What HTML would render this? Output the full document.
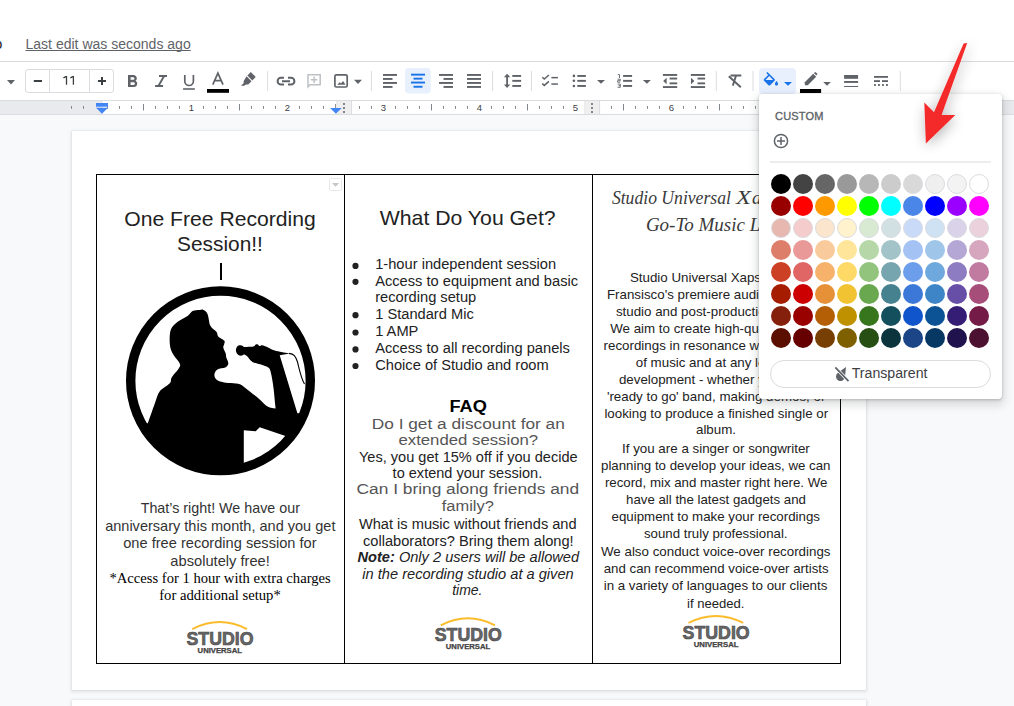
<!DOCTYPE html>
<html><head><meta charset="utf-8">
<style>
html,body{margin:0;padding:0}
body{width:1014px;height:706px;overflow:hidden;position:relative;background:#f8f9fa;font-family:"Liberation Sans",sans-serif}
.abs{position:absolute}
#hdr{left:0;top:0;width:1014px;height:61px;background:#fff}
#sep{left:0;top:61px;width:1014px;height:1px;background:#dadce0}
#tb{left:0;top:62px;width:1014px;height:38px;background:#fff}
#ruler{left:0;top:100px;width:1014px;height:15px;background:#e8eaed;border-top:1px solid #dadce0;border-bottom:1px solid #dadce0;box-sizing:border-box}
#rwhite{left:103px;top:101px;width:740px;height:13px;background:#fff}
.page{background:#fff;box-shadow:0 0 1px 0 rgba(60,64,67,.15),0 1px 3px 1px rgba(60,64,67,.12)}
svg{position:absolute;left:0;top:0;overflow:visible}
#pop{left:759px;top:94px;width:243px;height:305px;background:#fff;border-radius:4px;box-shadow:0 4px 8px 3px rgba(60,64,67,.15),0 1px 3px rgba(60,64,67,.3)}
.sw{position:absolute;width:20px;height:20px;border-radius:50%;box-sizing:border-box}
.lt{border:1px solid rgba(0,0,0,.1)}
</style></head><body>
<div id="hdr" class="abs"></div>
<div id="sep" class="abs"></div>
<div id="tb" class="abs"></div>
<div id="ruler" class="abs"></div>
<div id="rwhite" class="abs"></div>
<div class="abs page" style="left:72px;top:131px;width:794px;height:559px"></div>
<div class="abs page" style="left:72px;top:700px;width:794px;height:100px"></div>

<!-- table -->
<div class="abs" style="left:96px;top:174px;width:745px;height:490px;box-sizing:border-box;border:1px solid #000"></div>
<div class="abs" style="left:344px;top:174px;width:1px;height:490px;background:#000"></div>
<div class="abs" style="left:592px;top:174px;width:1px;height:490px;background:#000"></div>

<!-- document text -->
<svg width="1014" height="706" viewBox="0 0 1014 706" style="font-family:'Liberation Sans',sans-serif">
<g fill="#000">
 <text x="220" y="226" font-size="21" text-anchor="middle" textLength="191.5" lengthAdjust="spacingAndGlyphs" fill="#222">One Free Recording</text>
 <text x="220" y="250.5" font-size="21" text-anchor="middle" textLength="85.8" lengthAdjust="spacingAndGlyphs" fill="#222">Session!!</text>
</g>
<rect x="220" y="263" width="2" height="17" fill="#000"/>
<g fill="#333" font-size="14.4" text-anchor="middle">
 <text x="220.3" y="513" textLength="159.3" lengthAdjust="spacingAndGlyphs">That’s right! We have our</text>
 <text x="220.3" y="531" textLength="230.3" lengthAdjust="spacingAndGlyphs">anniversary this month, and you get</text>
 <text x="219.9" y="548" textLength="193.4" lengthAdjust="spacingAndGlyphs">one free recording session for</text>
 <text x="220.1" y="566" textLength="99.5" lengthAdjust="spacingAndGlyphs">absolutely free!</text>
</g>
<g fill="#000" font-size="14.67" text-anchor="middle" style="font-family:'Liberation Serif',serif">
 <text x="220.1" y="582.8" textLength="221.3" lengthAdjust="spacingAndGlyphs">*Access for 1 hour with extra charges</text>
 <text x="220" y="599.5" textLength="121.6" lengthAdjust="spacingAndGlyphs">for additional setup*</text>
</g>

<!-- col 2 -->
<text x="467.7" y="225.4" font-size="21" text-anchor="middle" textLength="175.9" lengthAdjust="spacingAndGlyphs" fill="#222">What Do You Get?</text>
<g fill="#222" font-size="14.67">
 <circle cx="355.5" cy="265.9" r="3.1"/>
 <circle cx="355.5" cy="281.8" r="3.1"/>
 <circle cx="355.5" cy="315.2" r="3.1"/>
 <circle cx="355.5" cy="332.5" r="3.1"/>
 <circle cx="355.5" cy="349.4" r="3.1"/>
 <circle cx="355.5" cy="366" r="3.1"/>
 <text x="375.2" y="269.4">1-hour independent session</text>
 <text x="375.2" y="285.7">Access to equipment and basic</text>
 <text x="375.2" y="302">recording setup</text>
 <text x="375.2" y="318.9">1 Standard Mic</text>
 <text x="375.2" y="336.2">1 AMP</text>
 <text x="375.2" y="353.1">Access to all recording panels</text>
 <text x="375.2" y="369.7">Choice of Studio and room</text>
</g>
<text x="468.1" y="411.6" font-size="16" font-weight="bold" text-anchor="middle" textLength="37.4" lengthAdjust="spacingAndGlyphs" fill="#000">FAQ</text>
<g fill="#555" font-size="14.67" text-anchor="middle">
 <text x="468.3" y="429.3" textLength="193.1" lengthAdjust="spacingAndGlyphs">Do I get a discount for an</text>
 <text x="468.3" y="444.7" textLength="139.7" lengthAdjust="spacingAndGlyphs">extended session?</text>
 <text x="467.8" y="494.4" textLength="222.5" lengthAdjust="spacingAndGlyphs">Can I bring along friends and</text>
 <text x="467.8" y="511.4" textLength="52.1" lengthAdjust="spacingAndGlyphs">family?</text>
</g>
<g fill="#222" font-size="14.67" text-anchor="middle">
 <text x="468.3" y="461.7" textLength="218.7" lengthAdjust="spacingAndGlyphs">Yes, you get 15% off if you decide</text>
 <text x="467.4" y="478.3" textLength="149.6" lengthAdjust="spacingAndGlyphs">to extend your session.</text>
 <text x="467.8" y="528.9" textLength="217.7" lengthAdjust="spacingAndGlyphs">What is music without friends and</text>
 <text x="468.3" y="545.5" textLength="210.7" lengthAdjust="spacingAndGlyphs">collaborators? Bring them along!</text>
 <text x="468.3" y="562.1" textLength="221.5" lengthAdjust="spacingAndGlyphs" font-style="italic"><tspan font-weight="bold">Note:</tspan> Only 2 users will be allowed</text>
 <text x="468" y="578.6" textLength="211.4" lengthAdjust="spacingAndGlyphs" font-style="italic">in the recording studio at a given</text>
 <text x="467.3" y="594.7" textLength="30.3" lengthAdjust="spacingAndGlyphs" font-style="italic">time.</text>
</g>

<!-- col 3 -->
<g fill="#3a3a3a" font-size="19" font-style="italic" style="font-family:'Liberation Serif',serif">
 <text x="611.9" y="203.8" textLength="119" lengthAdjust="spacingAndGlyphs">Studio Universal</text>
 <text x="736" y="203.8" textLength="15" lengthAdjust="spacingAndGlyphs">X</text>
 <text x="752" y="203.8">aps: San</text>
 <text x="645.9" y="231.4">Go-To Music Lab</text>
</g>
<g fill="#222" font-size="13.33">
 <text x="629.9" y="281.9">Studio Universal Xaps is San</text>
 <text x="606.9" y="299">Fransisco's premiere audio recording</text>
 <text x="615.9" y="316.1">studio and post-production facility.</text>
 <text x="610.2" y="333.4">We aim to create high-quality</text>
 <text x="603.6" y="350">recordings in resonance with all genres</text>
 <text x="635.8" y="367.1">of music and at any level of</text>
 <text x="618.9" y="384.4">development - whether you're a</text>
 <text x="606.9" y="401">'ready to go' band, making demos, or</text>
 <text x="604.4" y="417.6">looking to produce a finished single or</text>
</g>
<g fill="#222" font-size="13.33" text-anchor="middle">
 <text x="716" y="434.2">album.</text>
 <text x="715.9" y="452.7" textLength="187.8" lengthAdjust="spacingAndGlyphs">If you are a singer or songwriter</text>
 <text x="715.75" y="469.9" textLength="229.5" lengthAdjust="spacingAndGlyphs">planning to develop your ideas, we can</text>
 <text x="716.15" y="487" textLength="222.5" lengthAdjust="spacingAndGlyphs">record, mix and master right here. We</text>
 <text x="715.95" y="504" textLength="179.9" lengthAdjust="spacingAndGlyphs">have all the latest gadgets and</text>
 <text x="715.75" y="521" textLength="208.5" lengthAdjust="spacingAndGlyphs">equipment to make your recordings</text>
 <text x="715.75" y="538" textLength="143.5" lengthAdjust="spacingAndGlyphs">sound truly professional.</text>
 <text x="715.75" y="556" textLength="229.5" lengthAdjust="spacingAndGlyphs">We also conduct voice-over recordings</text>
 <text x="716.15" y="573" textLength="224.9" lengthAdjust="spacingAndGlyphs">and can recommend voice-over artists</text>
 <text x="715.55" y="590" textLength="223.7" lengthAdjust="spacingAndGlyphs">in a variety of languages to our clients</text>
 <text x="715.75" y="607.7" textLength="57.5" lengthAdjust="spacingAndGlyphs">if needed.</text>
</g>
</svg>

<!-- header + toolbar -->
<svg width="1014" height="706" viewBox="0 0 1014 706" style="font-family:'Liberation Sans',sans-serif">
 <text x="-5.5" y="48.8" font-size="14" fill="#202124">o</text>
 <text x="25.5" y="48.8" font-size="14" fill="#5f6368" textLength="165.2" lengthAdjust="spacingAndGlyphs">Last edit was seconds ago</text>
 <rect x="25.5" y="50" width="165.2" height="1" fill="#5f6368"/>
 <g fill="#5f6368" stroke="none">
  <!-- font dropdown arrow -->
  <path d="M7 80h8l-4 4.5z"/>
 </g>
 <!-- font size box -->
 <rect x="25.5" y="69.5" width="88" height="23" rx="2.5" fill="#fff" stroke="#dadce0"/>
 <path d="M49.5 70v22M89.5 70v22" stroke="#dadce0"/>
 <rect x="33.8" y="80" width="8.2" height="2" fill="#3c4043"/>
 <path d="M66.5 76.1v8.7M63.4 77.9l3.1-1.6M73.4 76.1v8.7M70.3 77.9l3.1-1.6" stroke="#3c4043" stroke-width="1.3" fill="none"/>
 <path d="M98 81h8M102 77v8" stroke="#3c4043" stroke-width="2"/>
 <g fill="#5f6368">
  <!-- bold -->
  <path transform="translate(121.98 71.56) scale(0.86)" d="M15.6 10.79c.97-.67 1.65-1.77 1.65-2.79 0-2.26-1.75-4-4-4H7v14h7.04c2.09 0 3.71-1.7 3.71-3.79 0-1.52-.86-2.82-2.15-3.42zM10 6.5h3c.83 0 1.5.67 1.5 1.5s-.67 1.5-1.5 1.5h-3v-3zm3.5 9H10v-3h3.5c.83 0 1.5.67 1.5 1.5s-.67 1.5-1.5 1.5z"/>
 </g>
 <g stroke="#5f6368" fill="none">
  <!-- italic -->
  <path d="M159 76h8M155.1 86h8M164 76.2L158.4 86" stroke-width="1.9"/>
  <!-- underline -->
  <path d="M184.8 75v6.2a4.3 4.3 0 0 0 8.6 0V75" stroke-width="1.7"/>
  <path d="M183.1 89h11.7" stroke-width="1.6"/>
  <!-- A -->
  <path d="M212.8 84.7L217.9 73.2L223 84.7M214.6 80.6h6.6" stroke-width="1.7"/>
 </g>
 <rect x="207" y="89" width="22" height="3.8" fill="#000"/>
 <!-- highlighter -->
 <g fill="#5f6368">
  <path d="M250.8 72.1l4.9 4.9-3.4 3.4-4.9-4.9z"/>
  <path d="M246.6 76.3l4.9 4.9-3.2 3.2h-2.4l-1.6 1.4h-3.3l2.7-2.7v-2.1z"/>
 </g>
 <path d="M267.6 71v20M371.4 71v20M492.6 71v20M531.5 71v20M716.3 71v20M753 71v20M900.3 71v20" stroke="#dadce0" stroke-width="1"/>
 <!-- link -->
 <g fill="none" stroke="#5f6368" stroke-width="2">
  <path d="M284 77.8h-3a3.4 3.4 0 0 0 0 6.8h3M288 77.8h3a3.4 3.4 0 0 1 0 6.8h-3M282 81.2h8"/>
 </g>
 <!-- comment (disabled) -->
 <g fill="none" stroke="#bdc1c6" stroke-width="1.5">
  <path d="M308 74.7h12.2v10h-10.2l-2 2.2z"/>
  <path d="M314.1 76.5v6.4M310.9 79.7h6.4"/>
 </g>
 <!-- image -->
 <rect x="334.9" y="74.8" width="12.3" height="12.2" rx="1.5" fill="none" stroke="#5f6368" stroke-width="1.7"/>
 <path d="M337.2 84.7l2.4-2.4 1.3 1.3 2.2-2.7 2.4 3.8z" fill="#5f6368"/>
 <path d="M354 79.8h8l-4 4.2zM597 80h8l-4 3.8zM642.9 80h8l-4 3.8z" fill="#5f6368"/>
 <!-- align left -->
 <g fill="#5f6368">
  <rect x="383" y="74" width="14" height="1.9"/><rect x="383" y="78" width="9.5" height="1.9"/><rect x="383" y="82" width="14" height="1.9"/><rect x="383" y="86" width="9.5" height="1.9"/>
 </g>
 <!-- align center active -->
 <rect x="405" y="68" width="25.8" height="25.5" rx="4" fill="#e8f0fe"/>
 <g fill="#1a73e8">
  <rect x="411" y="73.7" width="14" height="1.9"/><rect x="413.5" y="77.7" width="9" height="1.9"/><rect x="411" y="81.6" width="14" height="1.9"/><rect x="413.5" y="85.8" width="9" height="1.9"/>
 </g>
 <!-- align right -->
 <g fill="#5f6368">
  <rect x="439" y="74" width="14" height="1.9"/><rect x="443.5" y="78" width="9.5" height="1.9"/><rect x="439" y="82" width="14" height="1.9"/><rect x="443.5" y="86" width="9.5" height="1.9"/>
 </g>
 <!-- justify -->
 <g fill="#5f6368">
  <rect x="467" y="74" width="14" height="1.9"/><rect x="467" y="78" width="14" height="1.9"/><rect x="467" y="82" width="14" height="1.9"/><rect x="467" y="86" width="14" height="1.9"/>
 </g>
 <!-- line spacing -->
 <g fill="#5f6368">
  <path d="M507.1 73.7l3.2 3.6h-2.3v7.2h2.3l-3.2 3.5-3.2-3.5h2.3v-7.2h-2.3z"/>
  <rect x="512.3" y="75" width="8.8" height="1.9"/><rect x="512.3" y="79.9" width="8.8" height="1.9"/><rect x="512.3" y="85" width="8.8" height="1.9"/>
 </g>
 <!-- checklist -->
 <g fill="none" stroke="#5f6368" stroke-width="1.5">
  <path d="M542.3 77.2l2 1.8 4.6-4M542.3 83.6l2 1.8 4.6-4"/>
 </g>
 <g fill="#5f6368">
  <rect x="551.4" y="76.9" width="6.5" height="1.5"/><rect x="551.4" y="83.3" width="6.5" height="1.5"/>
 </g>
 <!-- bullet list -->
 <g fill="#5f6368">
  <circle cx="573.9" cy="75.9" r="1.3"/><circle cx="573.9" cy="80.8" r="1.3"/><circle cx="573.9" cy="86" r="1.3"/>
  <rect x="577.3" y="75" width="8.6" height="1.9"/><rect x="577.3" y="79.9" width="8.6" height="1.9"/><rect x="577.3" y="85" width="8.6" height="1.9"/>
 </g>
 <!-- numbered list -->
 <g fill="#5f6368">
  <path d="M617.8 74.6h1.7v3.4M617.6 79.2h2.7v1.5h-2.7v1.5h2.7M617.6 84.1h2.7v3.2h-2.7M618.6 85.7h1.7" fill="none" stroke="#5f6368" stroke-width="0.9"/>
  <rect x="623.1" y="75" width="9" height="1.9"/><rect x="623.1" y="79.9" width="9" height="1.9"/><rect x="623.1" y="85" width="9" height="1.9"/>
 </g>
 <!-- indent decrease -->
 <g fill="#5f6368">
  <rect x="662.9" y="74" width="14.3" height="1.9"/><rect x="669.6" y="77.6" width="7.6" height="1.9"/><rect x="669.6" y="82.4" width="7.6" height="1.9"/><rect x="662.9" y="86.1" width="14.3" height="1.9"/>
  <path d="M663.2 81l3.4-3.2v6.4z"/>
 </g>
 <!-- indent increase -->
 <g fill="#5f6368">
  <rect x="690.8" y="74" width="14.3" height="1.9"/><rect x="697.5" y="77.6" width="7.6" height="1.9"/><rect x="697.5" y="82.4" width="7.6" height="1.9"/><rect x="690.8" y="86.1" width="14.3" height="1.9"/>
  <path d="M694.4 81l-3.4-3.2v6.4z"/>
 </g>
 <!-- clear formatting -->
 <g fill="none" stroke="#5f6368" stroke-width="1.9">
  <path d="M730.5 75.5h10.8M736 75.8l-3.2 9.8M728.8 76.3l12 11"/>
 </g>
 <!-- fill color active -->
 <rect x="759" y="68" width="37" height="26" rx="4" fill="#e8f0fe"/>
 <g fill="#1a73e8">
 <g fill="#1a73e8">
  <path transform="translate(761.3 71.9) scale(0.8)" fill-rule="evenodd" d="M16.56 8.94L7.62 0 6.21 1.41l2.38 2.38-5.15 5.15c-.59.59-.59 1.54 0 2.12l5.5 5.5c.29.29.68.44 1.06.44s.77-.15 1.06-.44l5.5-5.5c.59-.58.59-1.53 0-2.12zM5.21 10L10 5.21 14.79 10H5.21zM19 11.5s-2 2.17-2 3.5c0 1.1.9 2 2 2s2-.9 2-2c0-1.33-2-3.5-2-3.5z"/>
  <path d="M784 82h8l-4 3.8z"/>
 </g>
 <!-- pen -->
 <g fill="#5f6368">
  <path d="M804.8 82.2l8.4-8.4 3.0 3.0-8.4 8.4h-3z"/>
  <path d="M813.9 73.1l1.6-1.1 2.0 2.0-1.1 1.6z"/>
  <path d="M823.2 82h7.7l-3.85 3.7z"/>
 </g>
 <rect x="800" y="89" width="21.1" height="4" fill="#000"/>
 <!-- border weight -->
 <g fill="#5f6368">
  <rect x="844.1" y="75" width="14" height="3.8"/><rect x="844.1" y="81" width="14" height="1.9"/><rect x="844.1" y="86" width="14" height="1"/>
 </g>
 <!-- border dash -->
 <g fill="#5f6368">
  <rect x="874" y="76" width="14" height="1.8"/>
  <rect x="874" y="80.2" width="6" height="1.8"/><rect x="882" y="80.2" width="6" height="1.8"/>
  <rect x="874" y="84.1" width="1.9" height="1.8"/><rect x="878" y="84.1" width="1.9" height="1.8"/><rect x="882" y="84.1" width="1.9" height="1.8"/><rect x="886" y="84.1" width="1.9" height="1.8"/>
 </g>
</svg>

<!-- ruler -->
<svg width="1014" height="706" viewBox="0 0 1014 706" style="font-family:'Liberation Sans',sans-serif">
 <text x="191.5" y="110.6" font-size="9.5" text-anchor="middle" fill="#3c4043">1</text>
 <text x="287.5" y="110.6" font-size="9.5" text-anchor="middle" fill="#3c4043">2</text>
 <text x="383.5" y="110.6" font-size="9.5" text-anchor="middle" fill="#3c4043">3</text>
 <text x="479.5" y="110.6" font-size="9.5" text-anchor="middle" fill="#3c4043">4</text>
 <text x="575.5" y="110.6" font-size="9.5" text-anchor="middle" fill="#3c4043">5</text>
 <text x="671.5" y="110.6" font-size="9.5" text-anchor="middle" fill="#3c4043">6</text>
 <text x="767.5" y="110.6" font-size="9.5" text-anchor="middle" fill="#3c4043">7</text>
 <path d="M71.5 106v2.8M83.5 106v2.8M107.5 106v2.8M119.5 106v2.8M131.5 106v2.8M143.5 104v6.5M155.5 106v2.8M167.5 106v2.8M179.5 106v2.8M203.5 106v2.8M215.5 106v2.8M227.5 106v2.8M239.5 104v6.5M251.5 106v2.8M263.5 106v2.8M275.5 106v2.8M299.5 106v2.8M311.5 106v2.8M323.5 106v2.8M335.5 104v6.5M347.5 106v2.8M359.5 106v2.8M371.5 106v2.8M395.5 106v2.8M407.5 106v2.8M419.5 106v2.8M431.5 104v6.5M443.5 106v2.8M455.5 106v2.8M467.5 106v2.8M491.5 106v2.8M503.5 106v2.8M515.5 106v2.8M527.5 104v6.5M539.5 106v2.8M551.5 106v2.8M563.5 106v2.8M587.5 106v2.8M599.5 106v2.8M611.5 106v2.8M623.5 104v6.5M635.5 106v2.8M647.5 106v2.8M659.5 106v2.8M683.5 106v2.8M695.5 106v2.8M707.5 106v2.8M719.5 104v6.5M731.5 106v2.8M743.5 106v2.8M755.5 106v2.8M779.5 106v2.8M791.5 106v2.8M803.5 106v2.8M815.5 104v6.5M827.5 106v2.8M839.5 106v2.8" stroke="#80868b" stroke-width="1"/>
 <rect x="336.3" y="101" width="15.3" height="13" fill="#efefef"/>
 <path d="M351.6 101v13" stroke="#dadce0"/>
 <path d="M336.3 101v13" stroke="#e0e0e0" stroke-width="0.6"/>
 <rect x="343" y="103" width="2" height="2" fill="#80868b"/>
 <rect x="343" y="107" width="2" height="2" fill="#80868b"/>
 <rect x="343" y="111" width="2" height="2" fill="#80868b"/>
 <rect x="584.3" y="101" width="15.3" height="13" fill="#efefef"/>
 <path d="M599.6 101v13" stroke="#dadce0"/>
 <path d="M584.3 101v13" stroke="#e0e0e0" stroke-width="0.6"/>
 <rect x="591" y="103" width="2" height="2" fill="#80868b"/>
 <rect x="591" y="107" width="2" height="2" fill="#80868b"/>
 <rect x="591" y="111" width="2" height="2" fill="#80868b"/>
 <rect x="96" y="103" width="12" height="3.7" fill="#4285f4"/>
 <path d="M96 107.7h12l-6 6z" fill="#4285f4"/>
 <path d="M330.1 108.1h11.6l-5.8 5.7z" fill="#4285f4"/>
 <rect x="329.5" y="178.5" width="12" height="12" rx="1" fill="#fff" stroke="#e8e8e8"/>
 <path d="M332.1 183h7l-3.5 3.8z" fill="#c6c6c6"/>
</svg>
<!-- singer logo -->
<svg width="1014" height="706" viewBox="0 0 1014 706">
 <defs><clipPath id="cin"><circle cx="220.5" cy="380.8" r="86"/></clipPath></defs>
 <circle cx="220.5" cy="380.8" r="89.8" fill="none" stroke="#000" stroke-width="9.4"/>
 <g clip-path="url(#cin)" fill="#000">
  <path d="M135 430L147.9 423C149.1 419.7 152.9 408.5 154.9 403.2 C156.9 397.9 157.3 394.6 159.8 391.3 C162.3 388.0 167.8 385.6 169.8 383.3 C171.8 381.0 170.2 379.9 171.7 377.4 C173.2 374.9 177.4 370.8 178.7 368.5 C180.0 366.2 180.7 366.0 179.7 363.5 C178.7 361.0 174.3 356.9 172.7 353.6 C171.0 350.3 170.1 347.7 169.8 343.7 C169.5 339.7 169.5 333.4 170.8 329.8 C172.1 326.2 174.9 324.1 177.7 321.8 C180.5 319.5 185.1 317.7 187.6 315.9 C190.1 314.1 190.6 311.9 192.6 310.9 C194.6 309.9 197.7 310.1 199.5 309.9 C201.3 309.7 202.2 309.2 203.5 309.9 C204.8 310.6 206.3 311.2 207.5 313.9 C208.7 316.5 208.9 322.8 210.4 325.8 C211.9 328.8 215.1 329.9 216.4 331.7 C217.7 333.5 217.1 335.2 218.4 336.7 C219.7 338.2 223.3 339.5 224.3 340.7 C225.3 341.9 224.5 342.5 224.3 343.7 C224.1 344.9 223.1 346.0 223.3 347.6 C223.5 349.2 225.2 352.0 225.7 353.6 C226.2 355.2 225.9 355.9 226.3 357.5 C226.7 359.1 228.5 361.8 228.3 363.5 C228.1 365.2 227.1 366.5 225.3 367.5 C223.5 368.5 219.2 368.2 217.4 369.4 C215.6 370.5 214.6 372.7 214.4 374.4 C214.2 376.1 214.9 378.1 216.4 379.4 C217.9 380.7 220.5 381.6 223.3 382.3 C226.1 383.0 230.5 383.0 233.3 383.3 C236.1 383.6 237.2 382.9 240.0 384.3 C242.8 385.7 246.5 389.0 249.8 391.5 C253.1 394.0 256.7 396.9 259.7 399.4 C262.7 401.9 265.0 404.9 267.6 406.4 C270.2 407.9 274.3 408.1 275.6 408.4C275.2 405.0 274.2 393.6 273.5 388.0 C272.8 382.4 272.1 378.3 271.4 375.0 C270.6 371.7 270.4 369.7 269.0 368.1 C267.6 366.5 265.9 366.2 263.1 365.2 C260.4 364.2 255.2 363.4 252.5 361.9 C249.8 360.4 248.6 357.6 247.2 356.3 C245.8 355.0 244.5 354.6 244.0 354.3L244 347C245.0 347.0 248.3 346.9 250.0 346.8 C251.7 346.7 253.0 346.6 254.0 346.2 C255.0 345.8 255.2 344.7 255.8 344.4 C256.4 344.1 257.2 344.1 257.8 344.4 C258.4 344.7 259.0 345.9 259.6 346.0 C260.2 346.1 260.8 345.3 261.4 345.2 C262.0 345.1 262.2 345.2 263.4 345.6 C264.6 346.0 266.9 346.9 268.5 347.7 C270.1 348.4 271.3 349.4 273.2 350.1 C275.1 350.8 277.2 351.2 280.0 351.8 C282.8 352.4 288.3 353.3 290.0 353.6L279.7 355.2L297.4 413.3L320 413L320 440L285.5 436.1L259.7 427.2L255.7 431.2L243.8 430.2L243.8 480L120 480L120 430Z"/>
  <ellipse cx="240.6" cy="350.4" rx="4.7" ry="5.3" transform="rotate(-15 240.6 350.4)"/>
  <path d="M289 353.4C294 354 295.5 356 297.5 362C299.5 370 301 378 304.5 384" fill="none" stroke="#000" stroke-width="1.1"/>
 </g>
</svg>
<!-- studio logos -->
<svg width="1014" height="706" viewBox="0 0 1014 706" style="font-family:'Liberation Sans',sans-serif">
 <g id="lg1">
  <path d="M192.3 629.1Q219.6 615 247 629.1" fill="none" stroke="#fbbc2c" stroke-width="2"/>
  <text x="220" y="644.6" font-size="18.4" font-weight="bold" text-anchor="middle" fill="#686868" stroke="#444"  stroke-width="0.6" textLength="67" lengthAdjust="spacingAndGlyphs">STUDIO</text>
  <text x="219.8" y="653.2" font-size="6.4" font-weight="bold" text-anchor="middle" fill="#444" stroke="#444" stroke-width="0.25" textLength="44.4" lengthAdjust="spacingAndGlyphs">UNIVERSAL</text>
 </g>
 <g>
  <path d="M440.7 625.4Q467.9 611.3 495 625.4" fill="none" stroke="#fbbc2c" stroke-width="2"/>
  <text x="468.3" y="640.6" font-size="18.2" font-weight="bold" text-anchor="middle" fill="#686868" stroke="#444"  stroke-width="0.6" textLength="67.1" lengthAdjust="spacingAndGlyphs">STUDIO</text>
  <text x="468" y="649.1" font-size="6.4" font-weight="bold" text-anchor="middle" fill="#444" stroke="#444" stroke-width="0.25" textLength="44.4" lengthAdjust="spacingAndGlyphs">UNIVERSAL</text>
 </g>
 <g>
  <path d="M688.5 622.9Q715.9 609 743.2 622.9" fill="none" stroke="#fbbc2c" stroke-width="2"/>
  <text x="716.1" y="638.5" font-size="18.2" font-weight="bold" text-anchor="middle" fill="#686868" stroke="#444"  stroke-width="0.6" textLength="67.1" lengthAdjust="spacingAndGlyphs">STUDIO</text>
  <text x="716.1" y="646.8" font-size="6.4" font-weight="bold" text-anchor="middle" fill="#444" stroke="#444" stroke-width="0.25" textLength="44.8" lengthAdjust="spacingAndGlyphs">UNIVERSAL</text>
 </g>
</svg>

<!-- popup -->
<div id="pop" class="abs">
 <div class="abs" style="left:16px;top:16px;font-size:11px;letter-spacing:0.2px;color:#5f6368;-webkit-text-stroke:0.35px #5f6368;line-height:11px;top:17px">CUSTOM</div>
 <svg width="243" height="305" viewBox="759 94 243 305">
  <circle cx="781" cy="141" r="6.6" fill="none" stroke="#5f6368" stroke-width="1.5"/>
  <path d="M781 137v8M777 141h8" stroke="#5f6368" stroke-width="1.5"/>
  <rect x="770" y="161.5" width="221" height="1" fill="#dadce0"/>
  <circle cx="781" cy="184" r="10" fill="#000000"/>
  <circle cx="803" cy="184" r="10" fill="#434343"/>
  <circle cx="825" cy="184" r="10" fill="#666666"/>
  <circle cx="847" cy="184" r="10" fill="#999999"/>
  <circle cx="869" cy="184" r="10" fill="#b7b7b7"/>
  <circle cx="891" cy="184" r="10" fill="#cccccc"/>
  <circle cx="913" cy="184" r="9.5" fill="#d9d9d9" stroke="#dadce0" stroke-width="1"/>
  <circle cx="935" cy="184" r="9.5" fill="#efefef" stroke="#dadce0" stroke-width="1"/>
  <circle cx="957" cy="184" r="9.5" fill="#f3f3f3" stroke="#dadce0" stroke-width="1"/>
  <circle cx="979" cy="184" r="9.5" fill="#ffffff" stroke="#dadce0" stroke-width="1"/>
  <circle cx="781" cy="206" r="10" fill="#980000"/>
  <circle cx="803" cy="206" r="10" fill="#ff0000"/>
  <circle cx="825" cy="206" r="10" fill="#ff9900"/>
  <circle cx="847" cy="206" r="10" fill="#ffff00"/>
  <circle cx="869" cy="206" r="10" fill="#00ff00"/>
  <circle cx="891" cy="206" r="10" fill="#00ffff"/>
  <circle cx="913" cy="206" r="10" fill="#4a86e8"/>
  <circle cx="935" cy="206" r="10" fill="#0000ff"/>
  <circle cx="957" cy="206" r="10" fill="#9900ff"/>
  <circle cx="979" cy="206" r="10" fill="#ff00ff"/>
  <circle cx="781" cy="228" r="9.5" fill="#e6b8af" stroke="#dadce0" stroke-width="1"/>
  <circle cx="803" cy="228" r="9.5" fill="#f4cccc" stroke="#dadce0" stroke-width="1"/>
  <circle cx="825" cy="228" r="9.5" fill="#fce5cd" stroke="#dadce0" stroke-width="1"/>
  <circle cx="847" cy="228" r="9.5" fill="#fff2cc" stroke="#dadce0" stroke-width="1"/>
  <circle cx="869" cy="228" r="9.5" fill="#d9ead3" stroke="#dadce0" stroke-width="1"/>
  <circle cx="891" cy="228" r="9.5" fill="#d0e0e3" stroke="#dadce0" stroke-width="1"/>
  <circle cx="913" cy="228" r="9.5" fill="#c9daf8" stroke="#dadce0" stroke-width="1"/>
  <circle cx="935" cy="228" r="9.5" fill="#cfe2f3" stroke="#dadce0" stroke-width="1"/>
  <circle cx="957" cy="228" r="9.5" fill="#d9d2e9" stroke="#dadce0" stroke-width="1"/>
  <circle cx="979" cy="228" r="9.5" fill="#ead1dc" stroke="#dadce0" stroke-width="1"/>
  <circle cx="781" cy="250" r="10" fill="#dd7e6b"/>
  <circle cx="803" cy="250" r="10" fill="#ea9999"/>
  <circle cx="825" cy="250" r="10" fill="#f9cb9c"/>
  <circle cx="847" cy="250" r="10" fill="#ffe599"/>
  <circle cx="869" cy="250" r="10" fill="#b6d7a8"/>
  <circle cx="891" cy="250" r="10" fill="#a2c4c9"/>
  <circle cx="913" cy="250" r="10" fill="#a4c2f4"/>
  <circle cx="935" cy="250" r="10" fill="#9fc5e8"/>
  <circle cx="957" cy="250" r="10" fill="#b4a7d6"/>
  <circle cx="979" cy="250" r="10" fill="#d5a6bd"/>
  <circle cx="781" cy="272" r="10" fill="#cc4125"/>
  <circle cx="803" cy="272" r="10" fill="#e06666"/>
  <circle cx="825" cy="272" r="10" fill="#f6b26b"/>
  <circle cx="847" cy="272" r="10" fill="#ffd966"/>
  <circle cx="869" cy="272" r="10" fill="#93c47d"/>
  <circle cx="891" cy="272" r="10" fill="#76a5af"/>
  <circle cx="913" cy="272" r="10" fill="#6d9eeb"/>
  <circle cx="935" cy="272" r="10" fill="#6fa8dc"/>
  <circle cx="957" cy="272" r="10" fill="#8e7cc3"/>
  <circle cx="979" cy="272" r="10" fill="#c27ba0"/>
  <circle cx="781" cy="294" r="10" fill="#a61c00"/>
  <circle cx="803" cy="294" r="10" fill="#cc0000"/>
  <circle cx="825" cy="294" r="10" fill="#e69138"/>
  <circle cx="847" cy="294" r="10" fill="#f1c232"/>
  <circle cx="869" cy="294" r="10" fill="#6aa84f"/>
  <circle cx="891" cy="294" r="10" fill="#45818e"/>
  <circle cx="913" cy="294" r="10" fill="#3c78d8"/>
  <circle cx="935" cy="294" r="10" fill="#3d85c6"/>
  <circle cx="957" cy="294" r="10" fill="#674ea7"/>
  <circle cx="979" cy="294" r="10" fill="#a64d79"/>
  <circle cx="781" cy="316" r="10" fill="#85200c"/>
  <circle cx="803" cy="316" r="10" fill="#990000"/>
  <circle cx="825" cy="316" r="10" fill="#b45f06"/>
  <circle cx="847" cy="316" r="10" fill="#bf9000"/>
  <circle cx="869" cy="316" r="10" fill="#38761d"/>
  <circle cx="891" cy="316" r="10" fill="#134f5c"/>
  <circle cx="913" cy="316" r="10" fill="#1155cc"/>
  <circle cx="935" cy="316" r="10" fill="#0b5394"/>
  <circle cx="957" cy="316" r="10" fill="#351c75"/>
  <circle cx="979" cy="316" r="10" fill="#741b47"/>
  <circle cx="781" cy="338" r="10" fill="#5b0f00"/>
  <circle cx="803" cy="338" r="10" fill="#660000"/>
  <circle cx="825" cy="338" r="10" fill="#783f04"/>
  <circle cx="847" cy="338" r="10" fill="#7f6000"/>
  <circle cx="869" cy="338" r="10" fill="#274e13"/>
  <circle cx="891" cy="338" r="10" fill="#0c343d"/>
  <circle cx="913" cy="338" r="10" fill="#1c4587"/>
  <circle cx="935" cy="338" r="10" fill="#073763"/>
  <circle cx="957" cy="338" r="10" fill="#20124d"/>
  <circle cx="979" cy="338" r="10" fill="#4c1130"/>
  <rect x="770.5" y="360.5" width="220" height="27" rx="13.5" fill="#fff" stroke="#dadce0"/>
  <path d="M846 367L844.98 376.96A4.5 4.5 0 1 1 837.87 372.85Z" fill="#5f6368"/>
  <path d="M835.3 367.4l13.2 13.8" stroke="#fff" stroke-width="3.2"/>
  <path d="M835.3 367.4l13.2 13.8" stroke="#5f6368" stroke-width="1.7"/>
  <text x="851.7" y="377.7" font-size="14" fill="#3c4043" textLength="75.8" lengthAdjust="spacingAndGlyphs">Transparent</text>
 </svg>
</div>
<svg width="1014" height="706" viewBox="0 0 1014 706">
 <defs><filter id="sh" x="-50%" y="-50%" width="200%" height="200%"><feGaussianBlur in="SourceAlpha" stdDeviation="7"/><feOffset dx="1" dy="3"/><feComponentTransfer><feFuncA type="linear" slope="0.3"/></feComponentTransfer><feMerge><feMergeNode/><feMergeNode in="SourceGraphic"/></feMerge></filter></defs>
 <path filter="url(#sh)" d="M963.6 43.6L967.2 43L941.6 115L955.3 115L925.9 143.4L924.3 102.6L934 112.3Z" fill="#f42a2a"/>
</svg>
<!--CONTENT-->

</body></html>
